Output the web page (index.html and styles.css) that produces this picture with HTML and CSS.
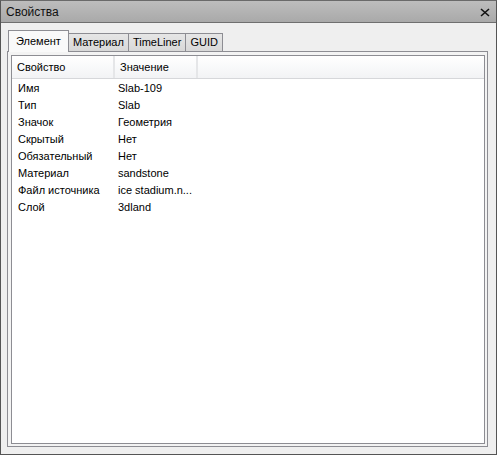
FILE: index.html
```html
<!DOCTYPE html>
<html lang="ru">
<head>
    <meta charset="UTF-8">
    <title>Свойства</title>
    <link rel="stylesheet" href="styles.css">
</head>
<body>
<div class="window">
    <div class="titlebar">
        <span class="title">Свойства</span>
        <button class="close-btn">
            <svg width="10" height="9" viewBox="0 0 10 9"><path d="M1 1 L9 8 M9 1 L1 8" stroke="#111" stroke-width="1.6"/></svg>
        </button>
    </div>

    <div class="content">
        <!-- вкладки -->
        <div class="tabs">
            <div class="tab active">Элемент</div>
            <div class="tab">Материал</div>
            <div class="tab">TimeLiner</div>
            <div class="tab">GUID</div>
        </div>

        <div class="pane">
            <div class="grid">
                <div class="grid-head">
                    <div class="col col-name">Свойство</div>
                    <div class="col col-value">Значение</div>
                    <div class="col col-rest"></div>
                </div>
                <div class="rows">
                    <div class="row"><span class="cell-name">Имя</span><span class="cell-value">Slab-109</span></div>
                    <div class="row"><span class="cell-name">Тип</span><span class="cell-value">Slab</span></div>
                    <div class="row"><span class="cell-name">Значок</span><span class="cell-value">Геометрия</span></div>
                    <div class="row"><span class="cell-name">Скрытый</span><span class="cell-value">Нет</span></div>
                    <div class="row"><span class="cell-name">Обязательный</span><span class="cell-value">Нет</span></div>
                    <div class="row"><span class="cell-name">Материал</span><span class="cell-value">sandstone</span></div>
                    <div class="row"><span class="cell-name">Файл источника</span><span class="cell-value">ice stadium.n...</span></div>
                    <div class="row"><span class="cell-name">Слой</span><span class="cell-value">3dland</span></div>
                </div>
            </div>
        </div>
    </div>
</div>
</body>
</html>
```

FILE: styles.css
```css
/* ========== общие ========== */
body {
    margin: 0;
    padding: 0;
    font-family: Tahoma, "Liberation Sans", Arial, sans-serif;
    font-size: 11px;
    color: #000;
}
.window {
    width: 497px;
    height: 455px;
    box-sizing: border-box;
    border: 1px solid #555;
    border-top-color: #6a6a6a;
    background: #efefef;
    display: flex;
    flex-direction: column;
}

/* --- заголовок --- */
.titlebar {
    height: 21px;
    display: flex;
    align-items: center;
    justify-content: space-between;
    padding: 0 6px 0 5px;
    background: linear-gradient(#bdbdbd, #a9a9a9);
    border-bottom: 1px solid #6f6f6f;
}
.title {
    font-size: 12px;
    color: #111;
}
.close-btn {
    background: transparent;
    border: none;
    padding: 0;
    margin-top: 1px;
    display: flex;
}

/* --- вкладки --- */
.content {
    flex: 1;
    display: flex;
    flex-direction: column;
    padding: 7px 8px 7px 6px;
}
.tabs {
    display: flex;
    align-items: flex-end;
    height: 21px;
    padding-left: 1px;
}
.tab {
    height: 17px;
    line-height: 17px;
    padding: 0 4px;
    margin-left: -1px;
    border: 1px solid #8d8d93;
    border-bottom: none;
    background: linear-gradient(#e6e6e6, #d8d8d8);
}
.tab.active {
    height: 21px;
    line-height: 20px;
    padding: 0 7px;
    background: #f9f9f9;
    position: relative;
    z-index: 1;
    margin-bottom: -1px;
    margin-left: 0;
}

.pane {
    flex: 1;
    border: 1px solid #8d8d93;
    padding: 3px 2px 2px 3px;
    background: #f3f3f3;
    display: flex;
}
.grid {
    flex: 1;
    border: 1px solid #8d8d93;
    background: #fff;
    display: flex;
    flex-direction: column;
}

/* --- таблица --- */
.grid-head {
    display: flex;
    height: 22px;
    background: linear-gradient(#fff, #f2f3f5);
    border-bottom: 1px solid #d6d7da;
}
.col {
    display: flex;
    align-items: center;
    padding-left: 5px;
    border-right: 2px solid #e5e6e8;
}
.col-name {
    width: 96px;
}
.col-value {
    width: 76px;
}
.col-rest {
    flex: 1;
    border-right: none;
}
.row {
    display: flex;
    height: 17px;
    align-items: center;
}
.cell-name {
    width: 100px;
    padding-left: 6px;
    white-space: nowrap;
}
.cell-value {
    white-space: nowrap;
}
```
